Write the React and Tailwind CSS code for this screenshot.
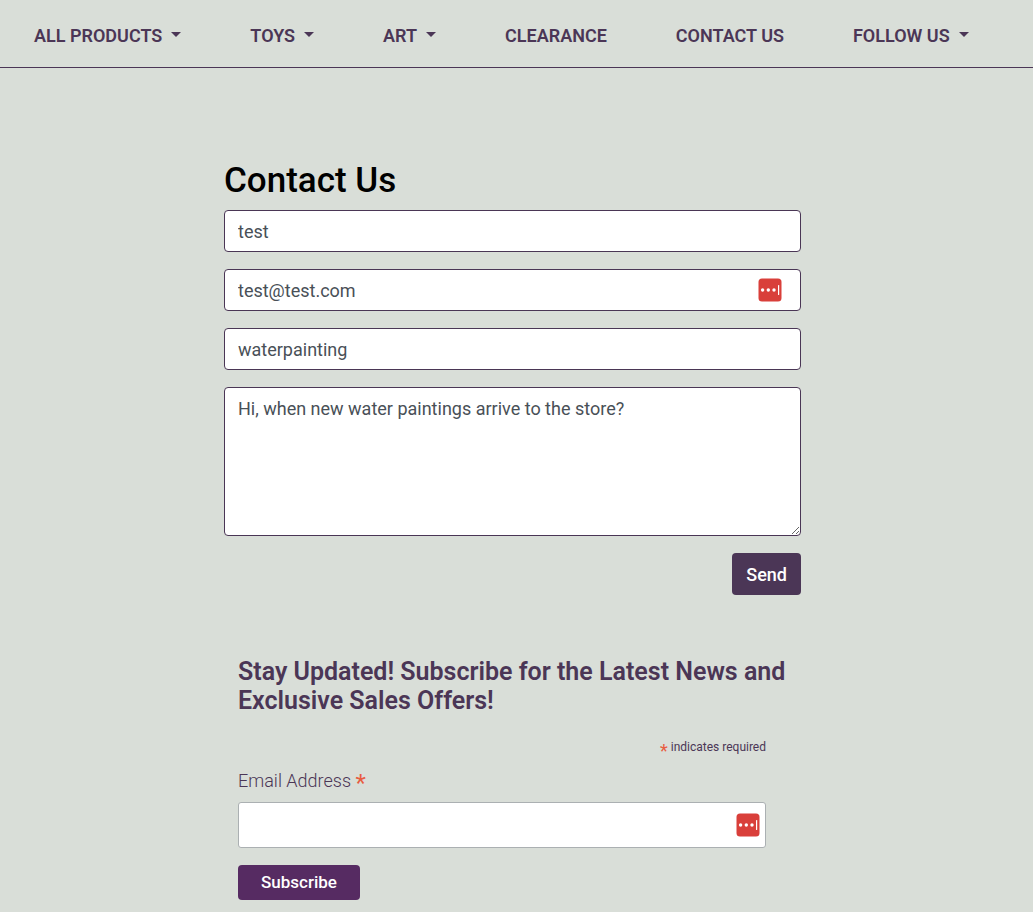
import React from "react";

const links = [
  { label: "ALL PRODUCTS", menu: true },
  { label: "TOYS", menu: true },
  { label: "ART", menu: true },
  { label: "CLEARANCE" },
  { label: "CONTACT US" },
  { label: "FOLLOW US", menu: true },
];

const field =
  "block w-full rounded border border-[#4a3655] bg-white px-[13px] text-[18px] leading-[27px] text-[#495057]";

function Caret() {
  return (
    <svg className="mb-0.5 h-[5px] w-[10px]" viewBox="0 0 10 5" fill="currentColor" aria-hidden="true">
      <path d="M0 0h10L5 5z" />
    </svg>
  );
}

function PasswordBadge() {
  return (
    <svg className="h-6 w-6" viewBox="0 0 24 24" aria-hidden="true">
      <rect x="0.5" y="0.5" width="23" height="23" rx="3.5" fill="#d93f3a" />
      <g fill="#fff">
        <circle cx="4.6" cy="12" r="1.7" />
        <circle cx="10.3" cy="12" r="1.7" />
        <circle cx="16" cy="12" r="1.7" />
        <rect x="20" y="7" width="1.2" height="10" rx="0.5" />
      </g>
    </svg>
  );
}

export default function App() {
  return (
    <div className="min-h-screen bg-[#d9ded8] pb-3 font-['Roboto',sans-serif] text-[#4b3656]">
      <header className="border-b border-[#4b3656]">
        <nav className="flex flex-wrap gap-x-[69px] pt-[22px] pb-[18px] pl-[34px]">
          {links.map((link) =>
            link.menu ? (
              <button
                key={link.label}
                type="button"
                aria-haspopup="true"
                className="flex items-center gap-[9px] text-[18px] leading-[27px] font-semibold"
              >
                {link.label}
                <Caret />
              </button>
            ) : (
              <a key={link.label} href="#" className="text-[18px] leading-[27px] font-semibold">
                {link.label}
              </a>
            )
          )}
        </nav>
      </header>

      <main className="pr-2">
        <div className="mx-auto max-w-[577px] pt-[91px]">
          <form onSubmit={(e) => e.preventDefault()}>
            <h1 className="mb-2 text-[35px] leading-[43px] font-medium text-black">Contact Us</h1>
            <div className="flex flex-col gap-[17px]">
              <input type="text" aria-label="Name" defaultValue="test" className={`${field} h-[42px]`} />
              <div className="relative">
                <input type="email" aria-label="Email" defaultValue="test@test.com" className={`${field} h-[42px]`} />
                <span className="pointer-events-none absolute inset-y-0 right-[19px] flex items-center">
                  <PasswordBadge />
                </span>
              </div>
              <input type="text" aria-label="Subject" defaultValue="waterpainting" className={`${field} h-[42px]`} />
              <textarea
                aria-label="Message"
                defaultValue="Hi, when new water paintings arrive to the store?"
                className={`${field} h-[149px] resize py-[7px]`}
              />
              <button
                type="submit"
                className="h-[42px] self-end rounded bg-[#4b3656] px-[14px] text-[18px] leading-[27px] font-medium text-white"
              >
                Send
              </button>
            </div>
          </form>

          <form className="px-[14px] pt-[62px]" onSubmit={(e) => e.preventDefault()}>
            <h2 className="text-[25px] leading-[29px] font-semibold">
              Stay Updated! Subscribe for the Latest News and Exclusive Sales Offers!
            </h2>
            <div className="pr-[21px]">
              <p className="mt-[23px] text-right text-[12px] leading-[18px]">
                <span className="align-[-6px] text-[18px] leading-[12px] text-[#e85c41]">*</span> indicates required
              </p>
              <label htmlFor="subscribe-email" className="mt-[10px] block text-[18px] leading-[27px] font-light">
                Email Address{" "}
                <span className="align-[-4px] text-[24px] leading-[18px] font-normal text-[#e85c41]">*</span>
              </label>
              <div className="relative mt-2">
                <input
                  id="subscribe-email"
                  type="email"
                  required
                  className="block h-[46px] w-full rounded-[3px] border border-[#abb0b2] bg-white px-2 text-[18px] text-[#495057] shadow-none"
                />
                <span className="pointer-events-none absolute inset-y-0 right-[6px] flex items-center">
                  <PasswordBadge />
                </span>
              </div>
              <button
                type="submit"
                className="mt-[17px] h-[35px] rounded bg-[#562b62] px-[23px] text-[17px] leading-[35px] font-medium text-white"
              >
                Subscribe
              </button>
            </div>
          </form>
        </div>
      </main>
    </div>
  );
}
